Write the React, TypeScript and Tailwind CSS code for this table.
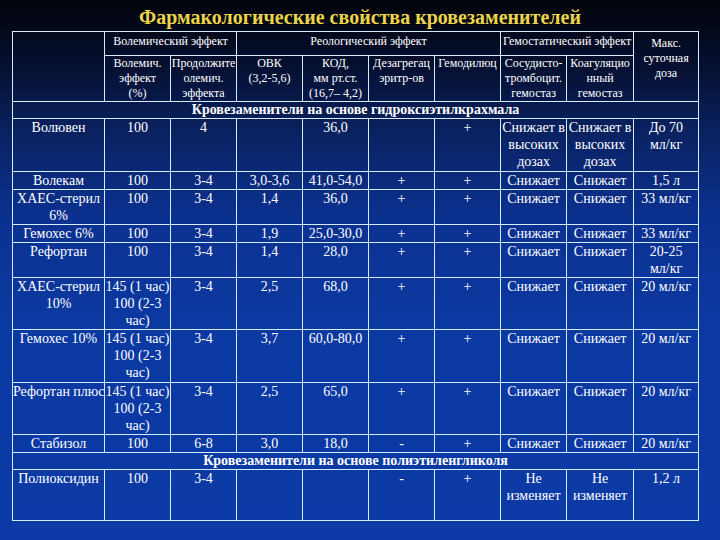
const rows: { h: string; cells: string[][] }[] = [
  {
    h: "h-[53px]",
    cells: [["Волювен"], ["100"], ["4"], [""], ["36,0"], [""], ["+"], ["Снижает в", "высоких", "дозах"], ["Снижает в", "высоких", "дозах"], ["До 70", "мл/кг"]],
  },
  {
    h: "h-[17px]",
    cells: [["Волекам"], ["100"], ["3-4"], ["3,0-3,6"], ["41,0-54,0"], ["+"], ["+"], ["Снижает"], ["Снижает"], ["1,5 л"]],
  },
  {
    h: "h-[35px]",
    cells: [["ХАЕС-стерил", "6%"], ["100"], ["3-4"], ["1,4"], ["36,0"], ["+"], ["+"], ["Снижает"], ["Снижает"], ["33 мл/кг"]],
  },
  {
    h: "h-[18px]",
    cells: [["Гемохес 6%"], ["100"], ["3-4"], ["1,9"], ["25,0-30,0"], ["+"], ["+"], ["Снижает"], ["Снижает"], ["33 мл/кг"]],
  },
  {
    h: "h-[35px]",
    cells: [["Рефортан"], ["100"], ["3-4"], ["1,4"], ["28,0"], ["+"], ["+"], ["Снижает"], ["Снижает"], ["20-25", "мл/кг"]],
  },
  {
    h: "h-[51px]",
    cells: [["ХАЕС-стерил", "10%"], ["145 (1 час)", "100 (2-3", "час)"], ["3-4"], ["2,5"], ["68,0"], ["+"], ["+"], ["Снижает"], ["Снижает"], ["20 мл/кг"]],
  },
  {
    h: "h-[53px]",
    cells: [["Гемохес 10%"], ["145 (1 час)", "100 (2-3", "час)"], ["3-4"], ["3,7"], ["60,0-80,0"], ["+"], ["+"], ["Снижает"], ["Снижает"], ["20 мл/кг"]],
  },
  {
    h: "h-[52px]",
    cells: [["Рефортан плюс"], ["145 (1 час)", "100 (2-3", "час)"], ["3-4"], ["2,5"], ["65,0"], ["+"], ["+"], ["Снижает"], ["Снижает"], ["20 мл/кг"]],
  },
  {
    h: "h-[17px]",
    cells: [["Стабизол"], ["100"], ["6-8"], ["3,0"], ["18,0"], ["-"], ["+"], ["Снижает"], ["Снижает"], ["20 мл/кг"]],
  },
];

const last = {
  h: "h-[51px]",
  cells: [["Полиоксидин"], ["100"], ["3-4"], [""], [""], ["-"], ["+"], ["Не", "изменяет"], ["Не", "изменяет"], ["1,2 л"]],
};

const td = "border border-[#d6ecfb] p-0 text-center align-top whitespace-nowrap overflow-hidden";
const th = "border border-[#d6ecfb] p-0 text-center align-top whitespace-nowrap overflow-hidden font-normal text-[12px] leading-[15px]";

const Lines = ({ lines }: { lines: string[] }) => (
  <>
    {lines.map((l, i) => (
      <div key={i}>{l}</div>
    ))}
  </>
);

const DataRow = ({ row }: { row: { h: string; cells: string[][] } }) => (
  <tr className={row.h}>
    {row.cells.map((c, i) => (
      <td key={i} className={td}>
        <Lines lines={c} />
      </td>
    ))}
  </tr>
);

const Section = ({ title }: { title: string }) => (
  <tr className="h-[17px]">
    <td colSpan={10} className={`${td} font-bold leading-[16px]`}>
      {title}
    </td>
  </tr>
);

const App = () => {
  return (
    <div className="h-[540px] w-[720px] overflow-hidden bg-[linear-gradient(180deg,#02040a_0%,#050f30_12%,#09215f_24%,#0b3190_40%,#0b39a2_60%,#0b3aa6_100%)] font-['Liberation_Serif','Times_New_Roman',serif] text-white">
      <div className="h-[31px] pt-[5px] text-center text-[20px] font-bold leading-[24px] text-[#ecd54c] [text-shadow:1px_1px_1px_#000]">
        Фармакологические свойства кровезаменителей
      </div>
      <table className="ml-[12px] w-[686px] table-fixed border-collapse text-[14px] leading-[17px]">
        <colgroup>
          <col className="w-[92px]" />
          <col className="w-[66px]" />
          <col className="w-[66px]" />
          <col className="w-[66px]" />
          <col className="w-[66px]" />
          <col className="w-[66px]" />
          <col className="w-[66px]" />
          <col className="w-[66px]" />
          <col className="w-[67px]" />
          <col className="w-[65px]" />
        </colgroup>
        <thead>
          <tr className="h-[24px]">
            <th rowSpan={2} className={th}></th>
            <th colSpan={2} className={`${th} pt-[2px]`}>Волемический эффект</th>
            <th colSpan={4} className={`${th} pt-[2px]`}>Реологический эффект</th>
            <th colSpan={2} className={`${th} pt-[2px]`}>Гемостатический эффект</th>
            <th rowSpan={2} className={`${th} pt-[4px]`}>
              <Lines lines={["Макс.", "суточная", "доза"]} />
            </th>
          </tr>
          <tr className="h-[46px]">
            <th className={th}><Lines lines={["Волемич.", "эффект", "(%)"]} /></th>
            <th className={th}><Lines lines={["Продолжите", "олемич.", "эффекта"]} /></th>
            <th className={th}><Lines lines={["ОВК", "(3,2-5,6)"]} /></th>
            <th className={th}><Lines lines={["КОД,", "мм рт.ст.", "(16,7– 4,2)"]} /></th>
            <th className={th}><Lines lines={["Дезагрегац", "эритр-ов"]} /></th>
            <th className={th}>Гемодилюц</th>
            <th className={th}><Lines lines={["Сосудисто-", "тромбоцит.", "гемостаз"]} /></th>
            <th className={th}><Lines lines={["Коагуляцио", "нный", "гемостаз"]} /></th>
          </tr>
        </thead>
        <tbody>
          <Section title="Кровезаменители на основе гидроксиэтилкрахмала" />
          {rows.map((r, i) => (
            <DataRow key={i} row={r} />
          ))}
          <Section title="Кровезаменители на основе полиэтиленгликоля" />
          <DataRow row={last} />
        </tbody>
      </table>
    </div>
  );
};

export default App;
